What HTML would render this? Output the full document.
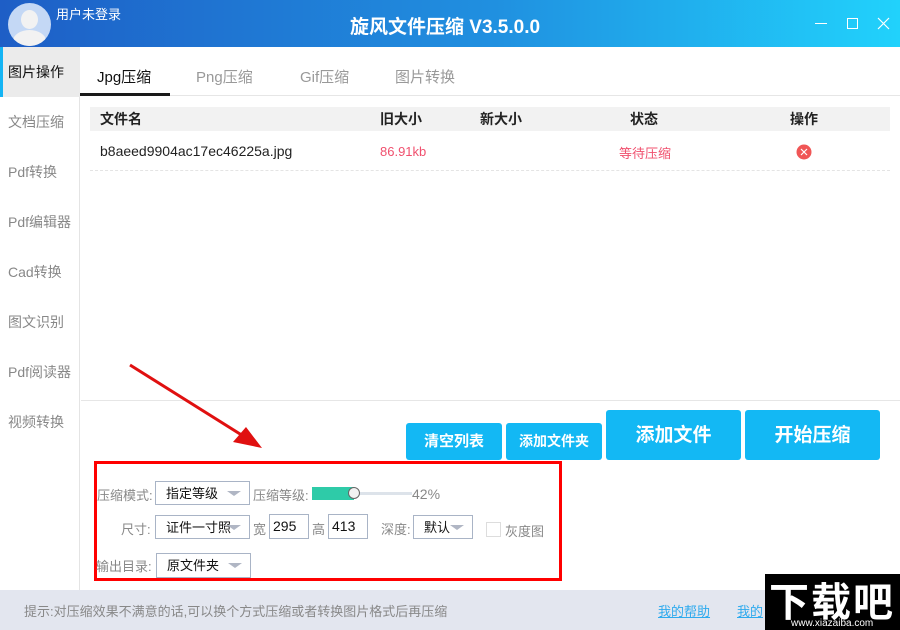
<!DOCTYPE html>
<html><head><meta charset="utf-8"><style>
*{margin:0;padding:0;box-sizing:border-box}
body{width:900px;height:630px;position:relative;overflow:hidden;background:#fff;font-family:"Liberation Sans","Noto Sans CJK SC",sans-serif;font-size:13px;color:#222}
.a{position:absolute}
.title{left:0;top:0;width:900px;height:47px;background:linear-gradient(90deg,#1e5ec6,#2090e0 55%,#21d2fc)}
.side{left:0;top:47px;width:80px;height:543px;border-right:1px solid #e4e4e4}
.si{position:absolute;left:0;width:80px;height:50px;line-height:50px;padding-left:8px;font-size:14px;color:#888}
.btn{position:absolute;background:#13b8f4;color:#fff;font-weight:bold;text-align:center;border-radius:3px}
.sel{position:absolute;height:24px;border:1px solid #a9b4c6;background:#fff;font-size:13px;padding-left:10px;line-height:24px;color:#111}
.sel:after{content:"";position:absolute;right:8px;top:9px;border-left:7px solid transparent;border-right:7px solid transparent;border-top:5px solid #b0b6c4}
.lbl{position:absolute;color:#888;font-size:13px}
.inp{position:absolute;height:25px;border:1px solid #a9b4c6;font-size:14px;padding-left:3px;line-height:23px;color:#111}
</style></head><body>
<div class="a title"></div>
<div class="a" style="left:8px;top:3px;width:43px;height:43px;border-radius:50%;background:#c4d8f5;overflow:hidden"><div class="a" style="left:13px;top:7px;width:17px;height:19px;border-radius:50%;background:#f2f2f2"></div><div class="a" style="left:5px;top:27px;width:33px;height:22px;border-radius:50% 50% 0 0;background:#f2f2f2"></div></div>
<div class="a" style="left:56px;top:4px;color:#fff;font-size:13px">用户未登录</div>
<div class="a" style="left:350px;top:12px;color:#fff;font-size:19px;font-weight:bold">旋风文件压缩 V3.5.0.0</div>
<div class="a" style="left:815px;top:23px;width:12px;height:1px;background:#fff"></div>
<div class="a" style="left:847px;top:18px;width:11px;height:11px;border:1px solid #fff"></div>
<svg class="a" style="left:877px;top:17px" width="13" height="13"><path d="M1 1L12 12M12 1L1 12" stroke="#fff" stroke-width="1.2"/></svg>
<div class="a side">
<div class="si" style="top:0;background:#ebebeb;color:#111;border-left:3px solid #14b4f4;padding-left:5px">图片操作</div>
<div class="si" style="top:50px">文档压缩</div>
<div class="si" style="top:100px">Pdf转换</div>
<div class="si" style="top:150px">Pdf编辑器</div>
<div class="si" style="top:200px">Cad转换</div>
<div class="si" style="top:250px">图文识别</div>
<div class="si" style="top:300px">Pdf阅读器</div>
<div class="si" style="top:350px">视频转换</div>
</div>
<div class="a" style="left:97px;top:66px;font-size:15px;color:#111">Jpg压缩</div>
<div class="a" style="left:196px;top:66px;font-size:15px;color:#999">Png压缩</div>
<div class="a" style="left:300px;top:66px;font-size:15px;color:#999">Gif压缩</div>
<div class="a" style="left:395px;top:66px;font-size:15px;color:#999">图片转换</div>
<div class="a" style="left:80px;top:93px;width:90px;height:3px;background:#1a1a1a"></div>
<div class="a" style="left:170px;top:95px;width:730px;height:1px;background:#e6e6e6"></div>
<div class="a" style="left:90px;top:107px;width:800px;height:24px;background:#f2f2f2;font-weight:bold;font-size:14px;line-height:24px">
<span class="a" style="left:10px">文件名</span><span class="a" style="left:290px">旧大小</span><span class="a" style="left:390px">新大小</span><span class="a" style="left:540px">状态</span><span class="a" style="left:700px">操作</span></div>
<div class="a" style="left:100px;top:143px;font-size:14px">b8aeed9904ac17ec46225a.jpg</div>
<div class="a" style="left:380px;top:144px;color:#f0506e;font-size:13px">86.91kb</div>
<div class="a" style="left:619px;top:143px;color:#f0506e;font-size:13px">等待压缩</div>
<svg class="a" style="left:796px;top:144px" width="16" height="16"><circle cx="8" cy="8" r="7.5" fill="#f05656"/><path d="M5 5L11 11M11 5L5 11" stroke="#fff" stroke-width="1.2"/></svg>
<div class="a" style="left:90px;top:170px;width:800px;border-top:1px dashed #e4e4e4"></div>
<div class="a" style="left:81px;top:400px;width:819px;height:1px;background:#e6e6e6"></div>
<svg class="a" style="left:120px;top:355px" width="160" height="110"><path d="M10 10L128 84" stroke="#e01010" stroke-width="3"/><path d="M142 93L113 87L126 72Z" fill="#e01010"/></svg>
<div class="btn" style="left:406px;top:423px;width:96px;height:37px;line-height:37px;font-size:15px">清空列表</div>
<div class="btn" style="left:506px;top:423px;width:96px;height:37px;line-height:37px;font-size:14px">添加文件夹</div>
<div class="btn" style="left:606px;top:410px;width:135px;height:50px;line-height:52px;font-size:19px">添加文件</div>
<div class="btn" style="left:745px;top:410px;width:135px;height:50px;line-height:52px;font-size:19px">开始压缩</div>
<div class="a" style="left:94px;top:461px;width:468px;height:120px;border:3px solid #f00"></div>
<div class="lbl" style="left:97px;top:485px">压缩模式:</div>
<div class="sel" style="left:155px;top:481px;width:95px">指定等级</div>
<div class="lbl" style="left:253px;top:485px">压缩等级:</div>
<div class="a" style="left:312px;top:487px;width:42px;height:13px;background:#2ecba8"></div>
<div class="a" style="left:354px;top:492px;width:58px;height:3px;background:#dde3ea"></div>
<div class="a" style="left:348px;top:487px;width:12px;height:12px;border-radius:50%;background:#f2f2f2;border:1px solid #666"></div>
<div class="lbl" style="left:412px;top:486px;font-size:14px">42%</div>
<div class="lbl" style="left:121px;top:519px">尺寸:</div>
<div class="sel" style="left:155px;top:515px;width:95px">证件一寸照</div>
<div class="lbl" style="left:253px;top:519px">宽</div>
<div class="inp" style="left:269px;top:514px;width:40px">295</div>
<div class="lbl" style="left:312px;top:519px">高</div>
<div class="inp" style="left:328px;top:514px;width:40px">413</div>
<div class="lbl" style="left:381px;top:519px">深度:</div>
<div class="sel" style="left:413px;top:515px;width:60px">默认</div>
<div class="a" style="left:486px;top:522px;width:15px;height:15px;border:1px solid #ddd"></div>
<div class="lbl" style="left:505px;top:521px">灰度图</div>
<div class="lbl" style="left:96px;top:556px">输出目录:</div>
<div class="sel" style="left:156px;top:553px;width:95px;height:25px">原文件夹</div>
<div class="a" style="left:0;top:590px;width:900px;height:40px;background:#e3e6ef"></div>
<div class="a" style="left:24px;top:601px;color:#888;font-size:13px">提示:对压缩效果不满意的话,可以换个方式压缩或者转换图片格式后再压缩</div>
<div class="a" style="left:658px;top:601px;color:#2eaaee;text-decoration:underline;font-size:13px">我的帮助</div>
<div class="a" style="left:737px;top:601px;color:#2eaaee;text-decoration:underline;font-size:13px">我的</div>
<div class="a" style="left:765px;top:574px;width:135px;height:56px;background:#000;color:#fff">
<div class="a" style="left:4px;top:-4px;font-size:40px;font-weight:bold;letter-spacing:2px">下载吧</div>
<div class="a" style="left:26px;top:44px;font-size:10px">www.xiazaiba.com</div></div>
</body></html>
